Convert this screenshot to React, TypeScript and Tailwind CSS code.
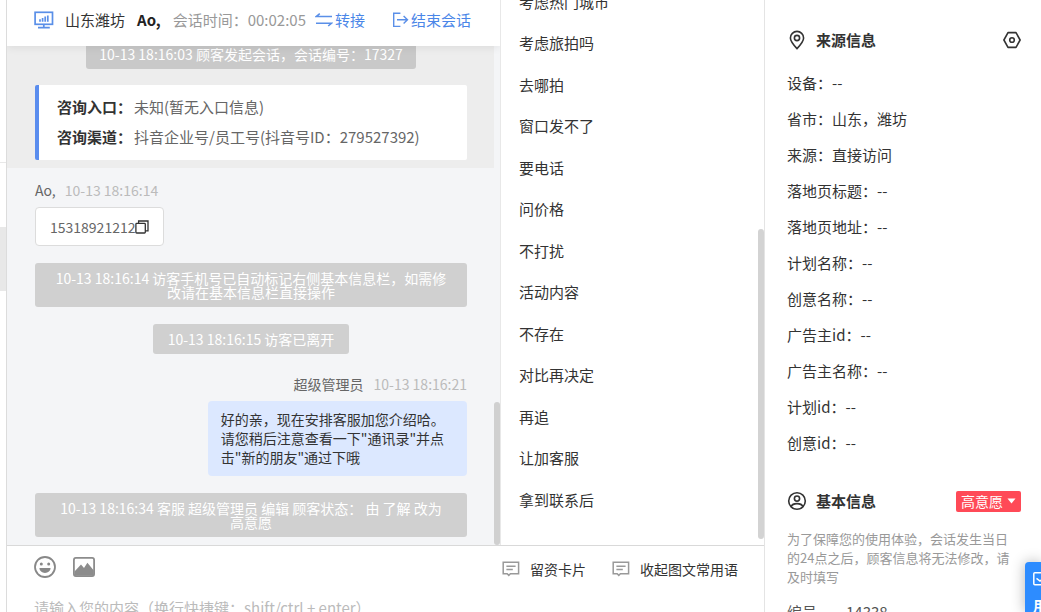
import React, { useState } from 'react';

const quickReplies = [
  '考虑热门城市',
  '考虑旅拍吗',
  '去哪拍',
  '窗口发不了',
  '要电话',
  '问价格',
  '不打扰',
  '活动内容',
  '不存在',
  '对比再决定',
  '再追',
  '让加客服',
  '拿到联系后',
];

const sourceInfo = [
  { label: '设备', value: '--' },
  { label: '省市', value: '山东，潍坊' },
  { label: '来源', value: '直接访问' },
  { label: '落地页标题', value: '--' },
  { label: '落地页地址', value: '--' },
  { label: '计划名称', value: '--' },
  { label: '创意名称', value: '--' },
  { label: '广告主id', value: '--' },
  { label: '广告主名称', value: '--' },
  { label: '计划id', value: '--' },
  { label: '创意id', value: '--' },
];

const MonitorIcon = () => (
  <svg width="20" height="18" viewBox="0 0 20 18" fill="none" stroke="#5a8fe8" strokeWidth="1.7">
    <rect x="1.1" y="1.3" width="17.4" height="12" />
    <path d="M9.8 13.2v3.2M4 16.6h11.8M6 8.2v2.6M8.6 7v3.8M11.2 5.6v5.2M13.8 4.4v6.4" />
  </svg>
);

const TransferIcon = () => (
  <svg width="18" height="14" viewBox="0 0 18 14" fill="none" stroke="#5a8fe8" strokeWidth="1.6">
    <path d="M17 3.5H1.4L4.8 0.7M1 10.2h15.6l-3.4 2.8" />
  </svg>
);

const ExitIcon = () => (
  <svg width="17" height="16" viewBox="0 0 17 16" fill="none" stroke="#5a8fe8" strokeWidth="1.4">
    <path d="M8.4 1.2H1.7v13.2h6.7M5 7.8h10.4M11.6 4l3.9 3.8-3.9 3.8" />
  </svg>
);

const CopyIcon = () => (
  <svg width="14" height="14" viewBox="0 0 14 14" fill="none" stroke="#333" strokeWidth="1.3">
    <rect x="0.9" y="3.4" width="9.4" height="9.6" rx="0.8" />
    <path d="M3.6 3.4V1h9.4v9.8h-2.7" />
  </svg>
);

const SmileIcon = () => (
  <svg width="22" height="22" viewBox="0 0 22 22">
    <circle cx="11" cy="11" r="10" fill="none" stroke="#888" strokeWidth="1.8" />
    <circle cx="7.3" cy="8" r="1.5" fill="#888" />
    <circle cx="14.7" cy="8" r="1.5" fill="#888" />
    <path d="M5.4 12h11.2a5.6 5 0 0 1-11.2 0z" fill="#888" />
  </svg>
);

const ImageIcon = () => (
  <svg width="22" height="20" viewBox="0 0 22 20">
    <rect x="0.9" y="0.9" width="20.2" height="18.2" rx="2" fill="none" stroke="#8c8c8c" strokeWidth="1.8" />
    <path d="M1.5 14.5 8 7.4l3 3.6 3.4-5.2 6.4 7.6v5.4H1.5z" fill="#8c8c8c" />
  </svg>
);

const NoteIcon = () => (
  <svg width="18" height="16" viewBox="0 0 18 16" fill="none" stroke="#999" strokeWidth="1.5">
    <path d="M1.2 1.2h15.4v11.6H8.4L6.8 14.4 5.2 12.8H1.2zM4.4 5.2h9.2M4.4 8.6h6.4" />
  </svg>
);

const PinIcon = () => (
  <svg width="20" height="20" viewBox="0 0 20 20" fill="none" stroke="#333" strokeWidth="1.6">
    <path d="M10 18.6C6.2 14.6 3.4 11.5 3.4 8a6.6 6.6 0 0 1 13.2 0c0 3.5-2.8 6.6-6.6 10.6z" />
    <circle cx="10" cy="8" r="2.6" />
  </svg>
);

const HexIcon = () => (
  <svg width="18" height="18" viewBox="0 0 18 18" fill="none" stroke="#333" strokeWidth="1.6">
    <path d="M5 1.6h8L17.1 9 13 16.4H5L0.9 9z" strokeLinejoin="round" />
    <circle cx="9" cy="9" r="2.3" />
  </svg>
);

const UserIcon = () => (
  <svg width="20" height="20" viewBox="0 0 20 20" fill="none" stroke="#333" strokeWidth="1.6">
    <circle cx="10" cy="10" r="8.3" />
    <circle cx="10" cy="7.6" r="2.6" />
    <path d="M4 15.6c1-2.3 3.2-3 6-3s5 .7 6 3" />
  </svg>
);

const SystemTip = ({ children }: { children: React.ReactNode }) => (
  <div className="self-center max-w-full rounded-[3px] bg-[#d0d0d0] px-[15px] py-2 text-center text-sm leading-[14px] text-white">
    {children}
  </div>
);

const ChatHeader = () => (
  <header className="relative z-10 flex h-[46px] shrink-0 items-center bg-white pl-[27px] pb-[6px] text-[15px] whitespace-nowrap shadow-[0_2px_8px_rgba(0,0,0,0.07)]">
    <MonitorIcon />
    <span className="ml-[11px] text-[#333]">山东潍坊</span>
    <strong className="ml-3 text-[#222]">Ao,</strong>
    <span className="ml-3 text-[#999]">会话时间：00:02:05</span>
    <button className="ml-[9px] flex items-center gap-[2px] text-[#4a86e8]">
      <TransferIcon />
      转接
    </button>
    <button className="ml-[27px] flex items-center gap-[2px] text-[#4a86e8]">
      <ExitIcon />
      结束会话
    </button>
  </header>
);

const ChatPanel = () => (
  <section className="relative flex min-w-0 flex-1 flex-col overflow-hidden bg-[#f4f5f7]">
    <ChatHeader />
    <div className="mr-[6px] flex min-h-0 flex-1 flex-col justify-end overflow-hidden pb-2">
      <div className="flex shrink-0 flex-col bg-[#ededed] pr-[27px] pb-2 pl-7">
        <div className="self-center rounded-[3px] bg-[#c9c9c9] px-[13px] py-2 text-sm leading-[14px] text-white">
          10-13 18:16:03 顾客发起会话，会话编号：17327
        </div>
        <div className="mt-4 rounded-[2px] border-l-4 border-[#5a8dee] bg-white pt-[7px] pr-4 pb-2 pl-[18px] text-[15px] leading-[30px] text-[#666]">
          <p>
            <strong className="mr-[2px] text-[#333]">咨询入口：</strong>未知(暂无入口信息)
          </p>
          <p>
            <strong className="mr-[2px] text-[#333]">咨询渠道：</strong>抖音企业号/员工号(抖音号ID：279527392)
          </p>
        </div>
      </div>

      <div className="flex shrink-0 flex-col pr-[27px] pl-7 pt-3 text-sm">
        <p className="leading-5 text-[#bbb]">
          <span className="mr-[9px] text-[#666]">Ao,</span>10-13 18:16:14
        </p>
        <div className="mt-[7px] flex h-[39px] items-center self-start rounded border border-[#dcdcdc] bg-white px-[14px] text-[#666]">
          15318921212
          <button aria-label="复制">
            <CopyIcon />
          </button>
        </div>

        <div className="mt-[17px] flex flex-col gap-[17px]">
          <SystemTip>10-13 18:16:14 访客手机号已自动标记右侧基本信息栏，如需修改请在基本信息栏直接操作</SystemTip>
          <SystemTip>10-13 18:16:15 访客已离开</SystemTip>
        </div>

        <p className="mt-5 text-right leading-5 text-[#bbb]">
          <span className="mr-[10px] text-[#666]">超级管理员</span>10-13 18:16:21
        </p>
        <div className="mt-[7px] mb-[17px] w-[60%] self-end rounded bg-[#dce8ff] py-[9px] pr-4 pl-[13px] leading-[19px] text-[#333]">
          好的亲，现在安排客服加您介绍哈。请您稍后注意查看一下"通讯录"并点击"新的朋友"通过下哦
        </div>

        <SystemTip>
          10-13 18:16:34 客服 超级管理员 编辑 顾客状态： 由 了解 改为 <span className="whitespace-nowrap">高意愿</span>
        </SystemTip>
      </div>
    </div>
    <div className="absolute right-0 bottom-0 h-[143px] w-[6px] rounded-full bg-[#d0d0d0]" />
  </section>
);

const ReplyPanel = () => (
  <section className="relative flex w-[264px] shrink-0 flex-col overflow-hidden border-l border-[#e8e8e8] bg-white pb-6">
    <ul className="-mt-[19px] flex flex-1 flex-col text-[15px] text-[#333]">
      {quickReplies.map((text) => (
        <li key={text} className="flex flex-1 items-center pl-[18px]">
          {text}
        </li>
      ))}
    </ul>
    <div className="absolute right-0 bottom-[6px] h-[310px] w-[6px] rounded-full bg-[#d3d3d3]" />
  </section>
);

const InputArea = () => {
  const [message, setMessage] = useState('');

  return (
    <footer className="h-[67px] shrink-0 overflow-hidden border-t border-[#d9d9d9] bg-white">
      <div className="flex h-[46px] items-center pr-[26px] pl-[27px] text-sm whitespace-nowrap text-[#333]">
        <div className="flex items-center gap-[17px] pb-1">
          <button aria-label="表情">
            <SmileIcon />
          </button>
          <button aria-label="图片">
            <ImageIcon />
          </button>
        </div>
        <button className="ml-auto flex items-center gap-[10px]">
          <NoteIcon />
          留资卡片
        </button>
        <button className="ml-[26px] flex items-center gap-[10px]">
          <NoteIcon />
          收起图文常用语
        </button>
      </div>
      <textarea
        aria-label="消息内容"
        value={message}
        onChange={(e) => setMessage(e.target.value)}
        className="mt-1 block w-full resize-none overflow-hidden px-[27px] text-[15px] leading-6 text-[#333] placeholder-[#bbb] focus:outline-none"
        placeholder="请输入您的内容（换行快捷键：shift/ctrl + enter）"
        rows={2}
      />
    </footer>
  );
};

const InfoPanel = () => (
  <aside className="w-[277px] shrink-0 overflow-hidden border-l border-[#e4e4e4] bg-white pr-5 pl-[22px] text-[15px] text-[#333]">
    <div className="mt-7 flex h-6 items-center">
      <PinIcon />
      <h2 className="ml-[9px] font-bold">来源信息</h2>
      <button aria-label="设置" className="ml-auto">
        <HexIcon />
      </button>
    </div>
    <ul className="mt-[13px] leading-9">
      {sourceInfo.map((item) => (
        <li key={item.label}>
          {item.label}：{item.value}
        </li>
      ))}
    </ul>

    <div className="mt-7 flex h-6 items-center">
      <UserIcon />
      <h2 className="ml-[9px] font-bold">基本信息</h2>
      <button className="ml-auto flex h-[21px] items-center gap-1 rounded-[2px] bg-[#ff4a57] px-[5px] text-sm text-white">
        高意愿
        <svg width="9" height="6" viewBox="0 0 9 6" fill="#fff">
          <path d="M0.5 0.5h8L4.5 5.5z" />
        </svg>
      </button>
    </div>
    <p className="mt-4 pr-2 text-[13px] leading-[19px] text-[#999]">
      为了保障您的使用体验，会话发生当日的24点之后，顾客信息将无法修改，请及时填写
    </p>
    <dl className="mt-[14px] flex leading-6 text-[#555]">
      <dt className="w-[59px]">编号</dt>
      <dd>14338</dd>
    </dl>
  </aside>
);

const FloatingButton = () => (
  <button className="absolute right-0 bottom-0 flex h-[50px] w-4 flex-col items-start overflow-hidden rounded-tl bg-[#2d8cff] pt-[10px] pl-2 text-sm leading-[14px] font-bold text-white shadow-[0_0_14px_rgba(0,0,0,0.3)]">
    <svg width="14" height="14" viewBox="0 0 14 14" fill="none" stroke="#fff" strokeWidth="1.5" className="shrink-0">
      <rect x="0.8" y="0.8" width="12.4" height="12" rx="1" />
      <path d="M3.5 6.4 7 9l3.5-2.6" />
    </svg>
    <span className="mt-3 whitespace-nowrap">用户</span>
  </button>
);

const App = () => {
  return (
    <div className="relative flex h-screen overflow-hidden bg-white font-['Noto_Sans_CJK_SC',sans-serif]">
      <nav className="flex w-[7px] shrink-0 flex-col border-r border-[#dcdcdc]">
        <div className="h-[163px] border-b border-[#e8e8e8]" />
        <div className="mt-16 h-16 bg-[#e8e8e8]" />
      </nav>
      <main className="flex min-w-0 flex-1 flex-col">
        <div className="flex min-h-0 flex-1">
          <ChatPanel />
          <ReplyPanel />
        </div>
        <InputArea />
      </main>
      <InfoPanel />
      <FloatingButton />
    </div>
  );
};

export default App;
